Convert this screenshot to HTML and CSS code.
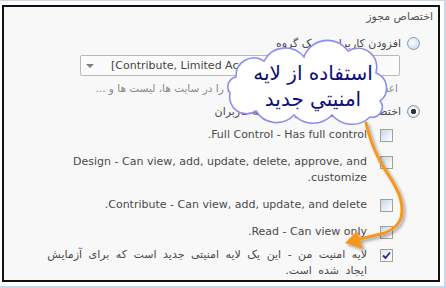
FILE: index.html
```html
<!DOCTYPE html>
<html lang="fa">
<head>
<meta charset="utf-8">
<link rel="stylesheet" href="styles.css">
</head>
<body>
<div class="screen">
  <div class="frame">
    <div class="panel" dir="rtl">
      <div class="title">اختصاص مجوز</div>
      <div class="opt first"><span class="radio"></span><span class="opt-label">افزودن کاربران به یک گروه</span></div>
      <div class="select">
        <span class="caret"></span>
        <span class="select-text">[Contribute, Limited Access] اعضای سایت آزمایشی</span>
      </div>
      <div class="hint">اعضای این گروه می توانند محتوای خود را در سایت ها، لیست ها و ...</div>
      <div class="opt second"><span class="radio on"></span><span class="opt-label">اختصاص مستقیم مجوزها به همه کاربران</span></div>
      <div class="checks">
        <div class="chk-row"><span class="cb"></span><span class="lbl">Full Control - Has full control.</span></div>
        <div class="chk-row"><span class="cb"></span><span class="lbl">Design - Can view, add, update, delete, approve, and customize.</span></div>
        <div class="chk-row"><span class="cb"></span><span class="lbl">Contribute - Can view, add, update, and delete.</span></div>
        <div class="chk-row"><span class="cb"></span><span class="lbl">Read - Can view only.</span></div>
        <div class="chk-row last"><span class="cb on"><svg viewBox="0 0 11 11" width="11" height="11"><path d="M2 5.5 L4.5 8 L9 2.5" fill="none" stroke="#1f2a8a" stroke-width="1.8"/></svg></span><span class="lbl fa">لایه امنیت من - این یک لایه امنیتی جدید است که برای آزمایش<br>ایجاد شده است.</span></div>
      </div>
    </div>
  </div>
  <svg class="overlay" viewBox="0 0 446 288" width="446" height="288">
    <defs>
      <filter id="sh" x="-20%" y="-20%" width="140%" height="140%">
        <feDropShadow dx="2" dy="2" stdDeviation="1.5" flood-color="#000" flood-opacity="0.35"/>
      </filter>
    </defs>
    <g filter="url(#sh)">
      <path d="M366 123 C370 140 374 150 380 161 C388 176 398 186 401 201 C404 216 401 226 385 233 L360 239" fill="none" stroke="#f7961c" stroke-width="3" stroke-linecap="round"/>
      <path d="M345 243 L357 231 L363 249 Z" fill="#f7961c"/>
    </g>
    <path transform="translate(228 43)" d="M8 34 A18 18 0 0 1 36 18 A24 24 0 0 1 76 14 A25 25 0 0 1 120 8 A19 19 0 0 1 148 30 A16 16 0 0 1 152 58 A10 10 0 0 1 142 74 A26 26 0 0 1 104 72 A26 26 0 0 1 66 72 A24 24 0 0 1 28 68 A17 17 0 0 1 2 50 A10 10 0 0 1 8 34 Z" fill="#ffffff" stroke="#8c8cf2" stroke-width="1.6"/>
  </svg>
  <div class="cloud-text" dir="rtl">استفاده از لایه<br>امنيتي جديد</div>
</div>
</body>
</html>
```
FILE: styles.css
```css
* { box-sizing: border-box; }
html, body { margin: 0; padding: 0; background: #ffffff; }
body { font-family: "DejaVu Sans", sans-serif; font-size: 11px; color: #4a4a4a; }

.screen { position: relative; width: 446px; height: 288px; overflow: hidden; }

.frame {
  width: 446px; height: 288px;
  padding: 4px 4px 4px 2px;
  border-top: 1px solid #c9d8e8;
  border-right: 2px solid #c9d8e8;
  border-bottom: 2px solid #c9d8e8;
  background: #ffffff;
}

.panel {
  height: 100%;
  border: 2px solid #111111;
  background: #f8f8f8;
  padding-top: 2px;
  display: flex;
  flex-direction: column;
}

.title { line-height: 16px; padding-right: 5px; color: #555; }

.opt { display: flex; align-items: center; gap: 6px; height: 16px; padding-right: 18px; }
.opt.first { margin-top: 10px; }
.opt.second { margin-top: 8px; }
.opt-label { white-space: nowrap; color: #4a4a4a; }

.radio {
  width: 13px; height: 13px; border-radius: 50%;
  border: 1px solid #8a98aa;
  background: radial-gradient(circle at 40% 40%, #ffffff 0%, #d6e4f2 60%, #b7cbe0 100%);
  flex: none;
}
.radio.on { background: radial-gradient(circle, #2d3542 0 2.5px, #ffffff 3px, #d6e4f2 65%, #b7cbe0 100%); }

.select {
  margin: 4px 38px 0 0;
  width: 320px; height: 21px;
  border: 1px solid #b8b8b8; border-radius: 2px;
  background: #fbfbfb;
  display: flex; align-items: center;
  direction: ltr;
  overflow: hidden;
}
.caret { width: 0; height: 0; border-left: 4px solid transparent; border-right: 4px solid transparent; border-top: 4px solid #808080; margin-left: 5px; flex: none; }
.select-text { margin-left: 17px; white-space: nowrap; color: #444; }

.hint { margin: 5px 40px 0 0; font-size: 10.5px; line-height: 14px; color: #8a8a8a; white-space: nowrap; }

.checks { display: flex; flex-direction: column; gap: 11px; margin-top: 8px; padding-right: 45px; }
.chk-row { display: flex; align-items: flex-start; gap: 13px; }
.chk-row.last { margin-top: -4px; }
.cb {
  width: 13px; height: 13px; margin-top: 2px; flex: none;
  border: 1px solid #a49f97;
  background: linear-gradient(135deg, #c3d6ea 0%, #e9f1f9 60%, #ffffff 100%);
  display: flex; align-items: center; justify-content: center;
}
.cb.on { background: linear-gradient(135deg, #dfe8f2 0%, #ffffff 100%); }
.lbl { width: 326px; line-height: 16px; color: #4a4a4a; }
.lbl.fa { word-spacing: 3px; }

.overlay { position: absolute; left: 0; top: 0; }

.cloud-text {
  position: absolute; left: 242px; top: 60px; width: 142px;
  text-align: center;
  font-family: "DejaVu Sans", sans-serif;
  font-size: 20px; line-height: 26px;
  color: #0d0d7a;
}
```
